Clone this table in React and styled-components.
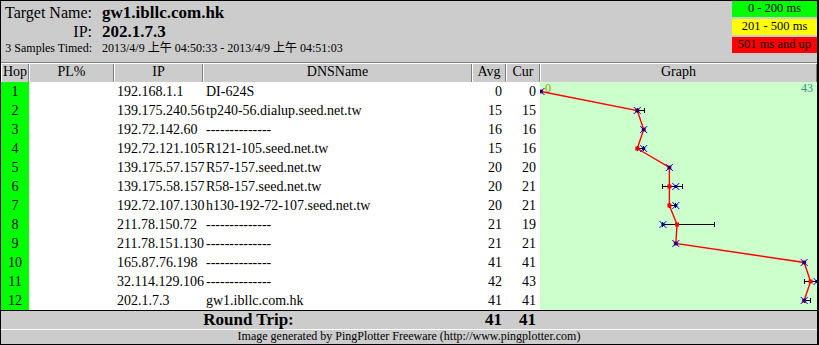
import styled, { createGlobalStyle } from 'styled-components';

const GlobalStyle = createGlobalStyle`
  body {
    margin: 0;
    background: #ffffff;
  }
`;

const COLS = '28px 85px 89px 269px 34px 34px';

const hops = [
  { ip: '192.168.1.1', dns: 'DI-624S', avg: 0, cur: 0, mean: 0, last: 0 },
  { ip: '139.175.240.56', dns: 'tp240-56.dialup.seed.net.tw', avg: 15, cur: 15, mean: 15, last: 15, lo: 15, hi: 16.2 },
  { ip: '192.72.142.60', dns: '--------------', avg: 16, cur: 16, mean: 16, last: 16 },
  { ip: '192.72.121.105', dns: 'R121-105.seed.net.tw', avg: 15, cur: 16, mean: 15, last: 16, lo: 15, hi: 16 },
  { ip: '139.175.57.157', dns: 'R57-157.seed.net.tw', avg: 20, cur: 20, mean: 20, last: 20 },
  { ip: '139.175.58.157', dns: 'R58-157.seed.net.tw', avg: 20, cur: 21, mean: 20, last: 21, lo: 19, hi: 22 },
  { ip: '192.72.107.130', dns: 'h130-192-72-107.seed.net.tw', avg: 20, cur: 21, mean: 20, last: 21, lo: 20, hi: 21 },
  { ip: '211.78.150.72', dns: '--------------', avg: 21, cur: 19, mean: 21.2, last: 19, lo: 19, hi: 27 },
  { ip: '211.78.151.130', dns: '--------------', avg: 21, cur: 21, mean: 21, last: 21 },
  { ip: '165.87.76.198', dns: '--------------', avg: 41, cur: 41, mean: 41, last: 41 },
  { ip: '32.114.129.106', dns: '--------------', avg: 42, cur: 43, mean: 42, last: 43, lo: 41, hi: 43 },
  { ip: '202.1.7.3', dns: 'gw1.ibllc.com.hk', avg: 41, cur: 41, mean: 41, last: 41, lo: 41, hi: 42 },
];

const Frame = styled.div`
  width: 819px;
  height: 345px;
  box-sizing: border-box;
  border: 1px solid #000;
  border-right-width: 2px;
  background: #cccccc;
  font-family: 'Liberation Serif', 'Noto Sans CJK TC', serif;
  color: #000;
  display: flex;
  flex-direction: column;
`;

const Header = styled.header`
  height: 61px;
  display: flex;
  justify-content: space-between;
  border-bottom: 1px solid #808080;
`;

const Target = styled.div`
  display: grid;
  grid-template-columns: 91px auto;
  column-gap: 10px;
  align-content: start;
  align-items: baseline;
  padding-top: 2px;
`;

const Label = styled.div`
  text-align: right;
  white-space: nowrap;
  font-size: ${(p) => (p.$small ? '12px' : '16px')};
  line-height: ${(p) => (p.$small ? '15px' : '19px')};
`;

const Value = styled.div`
  white-space: nowrap;
  font-size: ${(p) => (p.$small ? '12px' : '17px')};
  font-weight: ${(p) => (p.$small ? 400 : 700)};
  line-height: ${(p) => (p.$small ? '15px' : '19px')};
`;

const Legend = styled.div`
  display: flex;
  flex-direction: column;
  gap: 2px;
  width: 85px;
`;

const LegendItem = styled.div`
  height: 16px;
  line-height: 14px;
  background: ${(p) => p.$color};
  text-align: center;
  font-size: 12.5px;
`;

const ColHead = styled.div`
  display: grid;
  grid-template-columns: ${COLS} 1fr;
  height: 19px;
  box-sizing: border-box;
  border-top: 1px solid #fff;
`;

const HeadCell = styled.div`
  border-left: 1px solid #fff;
  border-right: 1px solid #808080;
  text-align: center;
  font-size: 14px;
  line-height: 16px;
`;

const Body = styled.div`
  display: flex;
  height: 228px;
`;

const Rows = styled.div`
  width: 539px;
  background: #fff;
`;

const Row = styled.div`
  display: grid;
  grid-template-columns: ${COLS};
  height: 19px;
  font-size: 14px;
  line-height: 19px;
`;

const HopCell = styled.div`
  background: #00ff00;
  text-align: center;
`;

const Cell = styled.div`
  white-space: nowrap;
  text-align: ${(p) => (p.$right ? 'right' : 'left')};
  padding: ${(p) => (p.$right ? '0 4px 0 0' : '0 0 0 3px')};
`;

const GraphSvg = styled.svg`
  display: block;
  background: #ccffcc;
`;

const TripRow = styled.div`
  display: grid;
  grid-template-columns: 471px 34px 34px 1fr;
  height: 18px;
  border-top: 1px solid #000;
  border-bottom: 1px solid #fff;
  font-size: 17px;
  font-weight: 700;
  line-height: 18px;
`;

const TripLabel = styled.div`
  text-align: center;
  padding-left: 24px;
`;

const TripValue = styled.div`
  text-align: right;
  padding-right: 4px;
`;

const Footer = styled.footer`
  height: 14px;
  font-size: 12px;
  line-height: 13px;
  text-align: center;
  white-space: nowrap;
`;

const gx = (ms) => 1 + (ms * 276) / 43;
const gy = (i) => i * 19 + 9.5;

function Graph() {
  const line = hops.map((h, i) => `${gx(h.mean)},${gy(i)}`).join(' ');
  return (
    <GraphSvg width="277" height="228" viewBox="0 0 277 228">
      <text x="5" y="10" fontSize="12" fill="#9a9a00" fontFamily="Liberation Serif, serif">0</text>
      <text x="273" y="10" fontSize="12" fill="#2f9588" textAnchor="end" fontFamily="Liberation Serif, serif">43</text>
      <polyline points={line} fill="none" stroke="#ff0000" strokeWidth="1.4" />
      {hops.map((h, i) =>
        h.lo !== undefined ? (
          <g key={`e${i}`} stroke="#000" strokeWidth="1" shapeRendering="crispEdges">
            <line x1={gx(h.lo)} y1={gy(i)} x2={gx(h.hi)} y2={gy(i)} />
            <line x1={gx(h.lo)} y1={gy(i) - 2.5} x2={gx(h.lo)} y2={gy(i) + 2.5} />
            <line x1={gx(h.hi)} y1={gy(i) - 2.5} x2={gx(h.hi)} y2={gy(i) + 2.5} />
          </g>
        ) : null
      )}
      {hops.map((h, i) => (
        <rect key={`m${i}`} x={gx(h.mean) - 2} y={gy(i) - 2} width="4" height="4" fill="#ff0000" />
      ))}
      {hops.map((h, i) => {
        const x = gx(h.last);
        const y = gy(i);
        return (
          <g key={`x${i}`}>
            <g stroke="#0000ff" strokeWidth="1">
              <line x1={x - 3.5} y1={y - 3.5} x2={x + 3.5} y2={y + 3.5} />
              <line x1={x - 3.5} y1={y + 3.5} x2={x + 3.5} y2={y - 3.5} />
            </g>
            <rect x={x - 1.5} y={y - 1.5} width="3" height="3" fill="#000080" />
          </g>
        );
      })}
    </GraphSvg>
  );
}

export default function App() {
  return (
    <>
      <GlobalStyle />
      <Frame>
        <Header>
          <Target>
            <Label>Target Name:</Label>
            <Value>gw1.ibllc.com.hk</Value>
            <Label>IP:</Label>
            <Value>202.1.7.3</Value>
            <Label $small>3 Samples Timed:</Label>
            <Value $small>2013/4/9 上午 04:50:33 - 2013/4/9 上午 04:51:03</Value>
          </Target>
          <Legend>
            <LegendItem $color="#00ff00">0 - 200 ms</LegendItem>
            <LegendItem $color="#ffff00">201 - 500 ms</LegendItem>
            <LegendItem $color="#ff0000">501 ms and up</LegendItem>
          </Legend>
        </Header>
        <ColHead>
          <HeadCell>Hop</HeadCell>
          <HeadCell>PL%</HeadCell>
          <HeadCell>IP</HeadCell>
          <HeadCell>DNSName</HeadCell>
          <HeadCell>Avg</HeadCell>
          <HeadCell>Cur</HeadCell>
          <HeadCell>Graph</HeadCell>
        </ColHead>
        <Body>
          <Rows>
            {hops.map((h, i) => (
              <Row key={h.ip}>
                <HopCell>{i + 1}</HopCell>
                <Cell />
                <Cell>{h.ip}</Cell>
                <Cell>{h.dns}</Cell>
                <Cell $right>{h.avg}</Cell>
                <Cell $right>{h.cur}</Cell>
              </Row>
            ))}
          </Rows>
          <Graph />
        </Body>
        <TripRow>
          <TripLabel>Round Trip:</TripLabel>
          <TripValue>41</TripValue>
          <TripValue>41</TripValue>
          <div />
        </TripRow>
        <Footer>Image generated by PingPlotter Freeware (http://www.pingplotter.com)</Footer>
      </Frame>
    </>
  );
}
